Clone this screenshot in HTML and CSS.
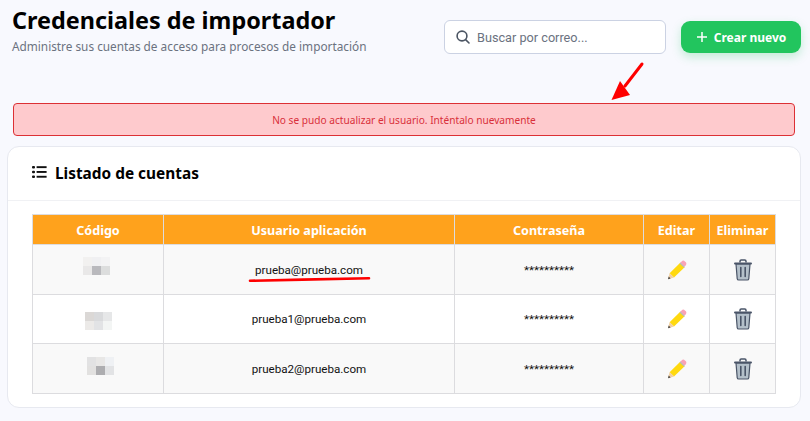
FILE: index.html
```html
<!DOCTYPE html>
<html lang="es">
<head>
    <meta charset="UTF-8">
    <meta name="viewport" content="width=device-width, initial-scale=1.0">
    <title>Credenciales de importador</title>
    <link rel="stylesheet" href="styles.css">
</head>
<body>
    <header class="page-header">
        <div class="page-heading">
            <h1>Credenciales de importador</h1>
            <p>Administre sus cuentas de acceso para procesos de importación</p>
        </div>
        <div class="page-actions">
            <label class="search-box">
                <svg width="14" height="14" viewBox="0 0 14 14" fill="none" stroke="#4b5563" stroke-width="1.6" stroke-linecap="round"><circle cx="6" cy="6" r="4.9"/><path d="M9.6 9.6l3.4 3.4"/></svg>
                <input type="text" placeholder="Buscar por correo...">
            </label>
            <button type="button" class="create-button">
                <svg width="12" height="12" viewBox="0 0 12 12" stroke="#fff" stroke-width="1.5"><path d="M6 1v10M1 6h10"/></svg>
                Crear nuevo
            </button>
        </div>
    </header>

    <div class="alert-error">No se pudo actualizar el usuario. Inténtalo nuevamente</div>

    <section class="accounts-card">
        <div class="card-title">
            <svg class="list-icon" width="16" height="14" viewBox="0 0 16 14" fill="#111"><rect x="0" y="1" width="3" height="2.4" rx="1"/><rect x="0" y="5.8" width="3" height="2.4" rx="1"/><rect x="0" y="10.6" width="3" height="2.4" rx="1"/><rect x="4.6" y="1.2" width="10" height="1.9"/><rect x="4.6" y="6" width="10" height="1.9"/><rect x="4.6" y="10.8" width="10" height="1.9"/></svg>
            <h2>Listado de cuentas</h2>
        </div>
        <div class="card-body">
            <table class="accounts-table">
                <thead>
                    <tr>
                        <th class="col-code">Código</th>
                        <th class="col-user">Usuario aplicación</th>
                        <th class="col-pass">Contraseña</th>
                        <th class="col-edit">Editar</th>
                        <th class="col-delete">Eliminar</th>
                    </tr>
                </thead>
                <tbody>
                    <tr>
                        <td>
                            <div class="blur-code first">
                                <i style="background:#f2f1f0"></i><i style="background:#f0f0f2"></i><i style="background:#f3f3f4"></i>
                                <i style="background:#e9e8e8"></i><i style="background:#b9b9bd"></i><i style="background:#dcdddd"></i>
                            </div>
                        </td>
                        <td>prueba@prueba.com</td>
                        <td>**********</td>
                        <td>
                            <svg class="icon-pencil" width="20" height="20" viewBox="0 0 20 20"><path d="M2.6 13.2L13.2 2.8l4.4 4.4L7 17.6z" fill="#ffd90f"/><path d="M13.2 2.8l1.4-1.4a2.4 2.4 0 0 1 3.3 0l.7.7a2.4 2.4 0 0 1 0 3.3l-1.4 1.4z" fill="#f9a3b7"/><path d="M12.6 3.4l4.4 4.4.9-.9-4.4-4.4z" fill="#b9b9b9"/><path d="M2.6 13.2L7 17.6l-6 1.6z" fill="#f2cfa0"/><path d="M1.7 16.6L1 19.2l2.6-.7z" fill="#444"/></svg>
                        </td>
                        <td>
                            <svg class="icon-trash" width="20" height="22" viewBox="0 0 20 22"><path d="M7 3.5V2.2C7 1.5 7.5 1 8.2 1h3.6c.7 0 1.2.5 1.2 1.2v1.3" fill="none" stroke="#4a5568" stroke-width="1.5"/><path d="M3 5l1.2 14.6c.1.8.7 1.4 1.5 1.4h8.6c.8 0 1.4-.6 1.5-1.4L17 5z" fill="#b4c0ca" stroke="#4a5568" stroke-width="1.2"/><rect x="1" y="3.5" width="18" height="2" rx="1" fill="#4a5568"/><path d="M7.8 8.5v9M12.2 8.5v9" stroke="#4a5568" stroke-width="1.6" stroke-linecap="round"/></svg>
                        </td>
                    </tr>
                    <tr>
                        <td>
                            <div class="blur-code second">
                                <i style="background:#dbd8d6"></i><i style="background:#d9dadc"></i><i style="background:#e6e7e8"></i>
                                <i style="background:#eceae8"></i><i style="background:#e2e3e5"></i><i style="background:#f3f5f4"></i>
                            </div>
                        </td>
                        <td>prueba1@prueba.com</td>
                        <td>**********</td>
                        <td>
                            <svg class="icon-pencil" width="20" height="20" viewBox="0 0 20 20"><path d="M2.6 13.2L13.2 2.8l4.4 4.4L7 17.6z" fill="#ffd90f"/><path d="M13.2 2.8l1.4-1.4a2.4 2.4 0 0 1 3.3 0l.7.7a2.4 2.4 0 0 1 0 3.3l-1.4 1.4z" fill="#f9a3b7"/><path d="M12.6 3.4l4.4 4.4.9-.9-4.4-4.4z" fill="#b9b9b9"/><path d="M2.6 13.2L7 17.6l-6 1.6z" fill="#f2cfa0"/><path d="M1.7 16.6L1 19.2l2.6-.7z" fill="#444"/></svg>
                        </td>
                        <td>
                            <svg class="icon-trash" width="20" height="22" viewBox="0 0 20 22"><path d="M7 3.5V2.2C7 1.5 7.5 1 8.2 1h3.6c.7 0 1.2.5 1.2 1.2v1.3" fill="none" stroke="#4a5568" stroke-width="1.5"/><path d="M3 5l1.2 14.6c.1.8.7 1.4 1.5 1.4h8.6c.8 0 1.4-.6 1.5-1.4L17 5z" fill="#b4c0ca" stroke="#4a5568" stroke-width="1.2"/><rect x="1" y="3.5" width="18" height="2" rx="1" fill="#4a5568"/><path d="M7.8 8.5v9M12.2 8.5v9" stroke="#4a5568" stroke-width="1.6" stroke-linecap="round"/></svg>
                        </td>
                    </tr>
                    <tr>
                        <td>
                            <div class="blur-code third">
                                <i style="background:#e2e2e3"></i><i style="background:#e8e7e6"></i><i style="background:#eff1f4"></i>
                                <i style="background:#e2e1e0"></i><i style="background:#adadb0"></i><i style="background:#e2e3e5"></i>
                            </div>
                        </td>
                        <td>prueba2@prueba.com</td>
                        <td>**********</td>
                        <td>
                            <svg class="icon-pencil" width="20" height="20" viewBox="0 0 20 20"><path d="M2.6 13.2L13.2 2.8l4.4 4.4L7 17.6z" fill="#ffd90f"/><path d="M13.2 2.8l1.4-1.4a2.4 2.4 0 0 1 3.3 0l.7.7a2.4 2.4 0 0 1 0 3.3l-1.4 1.4z" fill="#f9a3b7"/><path d="M12.6 3.4l4.4 4.4.9-.9-4.4-4.4z" fill="#b9b9b9"/><path d="M2.6 13.2L7 17.6l-6 1.6z" fill="#f2cfa0"/><path d="M1.7 16.6L1 19.2l2.6-.7z" fill="#444"/></svg>
                        </td>
                        <td>
                            <svg class="icon-trash" width="20" height="22" viewBox="0 0 20 22"><path d="M7 3.5V2.2C7 1.5 7.5 1 8.2 1h3.6c.7 0 1.2.5 1.2 1.2v1.3" fill="none" stroke="#4a5568" stroke-width="1.5"/><path d="M3 5l1.2 14.6c.1.8.7 1.4 1.5 1.4h8.6c.8 0 1.4-.6 1.5-1.4L17 5z" fill="#b4c0ca" stroke="#4a5568" stroke-width="1.2"/><rect x="1" y="3.5" width="18" height="2" rx="1" fill="#4a5568"/><path d="M7.8 8.5v9M12.2 8.5v9" stroke="#4a5568" stroke-width="1.6" stroke-linecap="round"/></svg>
                        </td>
                    </tr>
                </tbody>
            </table>
        </div>
    </section>

    <!-- red annotations drawn on top of the screenshot -->
    <svg class="arrow-mark" width="36" height="42" viewBox="0 0 36 42"><path d="M32 4L15 26" stroke="#fe0000" stroke-width="3" stroke-linecap="round"/><path d="M1.5 40L10 21l10 14z" fill="#fe0000"/></svg>
    <svg class="underline-mark" width="124" height="7" viewBox="0 0 124 7"><path d="M2 4.8C40 4 85 3 121 2.2" fill="none" stroke="#fe0000" stroke-width="2.6" stroke-linecap="round"/></svg>
</body>
</html>
```

FILE: styles.css
```css
* {
    margin: 0;
    padding: 0;
    box-sizing: border-box;
}

body {
    font-family: 'Noto Sans', 'Open Sans', sans-serif;
    background: #f8f9fe;
    color: #111;
    width: 810px;
    height: 421px;
    overflow: hidden;
    position: relative;
}

.page-header {
    display: flex;
    justify-content: space-between;
    padding: 4px 9px 0 12px;
    height: 103px;
}

.page-heading h1 {
    font-size: 23.4px;
    font-weight: 700;
    line-height: 33px;
    color: #000;
}

.page-heading p {
    margin-top: 1px;
    font-size: 11.8px;
    line-height: 16px;
    color: #6b7280;
}

.page-actions {
    display: flex;
    align-items: flex-start;
    gap: 15px;
    padding-top: 16px;
}

.search-box {
    display: flex;
    align-items: center;
    gap: 7px;
    width: 222px;
    height: 34px;
    padding: 0 11px;
    background: #fff;
    border: 1px solid #cbd2e3;
    border-radius: 6px;
}

.search-box input {
    flex: 1;
    min-width: 0;
    border: none;
    outline: none;
    background: none;
    font-family: Roboto, sans-serif;
    font-size: 12.7px;
}

.search-box input::placeholder {
    color: #6b7280;
    opacity: 1;
}

.create-button {
    display: flex;
    align-items: center;
    justify-content: center;
    gap: 6px;
    width: 120px;
    height: 32px;
    margin-top: 1px;
    border: none;
    border-radius: 9px;
    background: #22c55e;
    color: #fff;
    font-family: inherit;
    font-size: 12px;
    font-weight: 700;
    box-shadow: 0 4px 10px rgba(34, 197, 94, 0.25);
}

.alert-error {
    height: 33px;
    margin: 0 15px 0 13px;
    background: #fecacd;
    border: 1px solid #dc3035;
    border-radius: 4px;
    color: #d9303a;
    font-size: 10.15px;
    line-height: 32px;
    text-align: center;
}

.accounts-card {
    width: 794px;
    height: 262px;
    margin: 10px 0 0 7px;
    background: #fff;
    border: 1px solid #e7e9f0;
    border-radius: 12px;
}

.card-title {
    display: flex;
    align-items: center;
    gap: 7px;
    height: 54px;
    padding: 0 24px;
    border-bottom: 1px solid #f0f1f4;
}

.card-title h2 {
    font-size: 15.4px;
    font-weight: 700;
    color: #000;
}

.list-icon {
    margin-top: -3px;
}

.card-body {
    padding: 13px 24px 0;
}

.accounts-table {
    width: 744px;
    border-collapse: collapse;
    table-layout: fixed;
    font-family: Roboto, sans-serif;
    font-size: 11.6px;
    text-align: center;
}

.accounts-table th,
.accounts-table td {
    border: 1px solid #dcdcdf;
    vertical-align: middle;
}

.accounts-table th {
    height: 30px;
    padding-top: 2px;
    background: #ffa21c;
    color: #fff;
    font-family: 'Noto Sans', sans-serif;
    font-size: 12.6px;
    font-weight: 700;
}

.accounts-table td {
    height: 50px;
    color: #111;
}

.accounts-table tbody tr:nth-child(2) td {
    height: 49px;
}

.accounts-table tbody tr:nth-child(odd) {
    background: #f9f9f9;
}

.col-code { width: 131px; }
.col-user { width: 291px; }
.col-pass { width: 189px; }
.col-edit { width: 66px; }
.col-delete { width: 66px; }

.icon-pencil,
.icon-trash {
    display: block;
    margin: 0 auto;
}

.blur-code {
    display: grid;
    grid-template-columns: repeat(3, 9px);
    grid-auto-rows: 9px;
    width: 27px;
}

.blur-code.first { margin: 0 0 7px 50px; }
.blur-code.second { margin: 4px 0 0 52px; }
.blur-code.third { margin: 0 0 5px 54px; }

.arrow-mark {
    position: absolute;
    left: 610px;
    top: 60px;
}

.underline-mark {
    position: absolute;
    left: 248px;
    top: 276px;
}
```
